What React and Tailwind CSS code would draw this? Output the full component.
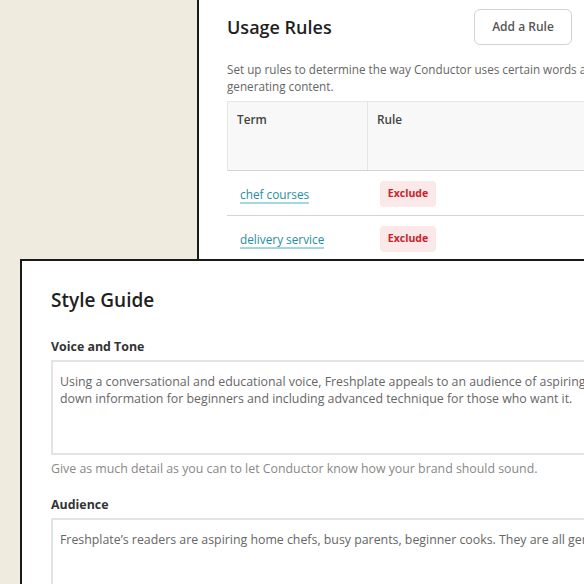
export default function App() {
  const rules = [
    { term: 'chef courses', rule: 'Exclude' },
    { term: 'delivery service', rule: 'Exclude' },
  ]

  return (
    <div className="w-[584px] h-[584px] overflow-hidden bg-[#efebdf] font-['Open_Sans',sans-serif]">
      {/* usage rules card */}
      <div className="ml-[197px] w-[420px] h-[261px] overflow-hidden bg-white border-l-2 border-b-2 border-[#1a1a1a] pl-[28px] pt-[9px]">
        <div className="flex items-center justify-between w-[345px] h-[36px]">
          <h2 className="text-[18px] leading-[26px] font-semibold text-[#1f1f1f]">Usage Rules</h2>
          <button className="w-[98px] h-[36px] rounded-[6px] border border-[#d2d2d2] bg-white text-[12px] font-semibold text-[#555]">
            Add a Rule
          </button>
        </div>
        <p className="mt-[16px] text-[11.7px] leading-[17px] text-[#666] whitespace-nowrap">
          Set up rules to determine the way Conductor uses certain words and phrases when
          <br />
          generating content.
        </p>
        <div className="mt-[6px] w-[420px]">
          <div className="flex h-[70px] bg-[#f8f8f8] border border-[#e6e6e6] border-b-[#d4d4d4]">
            <div className="w-[140px] border-r border-[#e6e6e6] pl-[9px] pt-[7px] text-[11.8px] leading-[20px] font-semibold text-[#444]">
              Term
            </div>
            <div className="flex-1 pl-[9px] pt-[7px] text-[11.8px] leading-[20px] font-semibold text-[#444]">
              Rule
            </div>
          </div>
          {rules.map((r) => (
            <div key={r.term} className="flex items-center h-[45px] border-b border-[#d4d4d4]">
              <div className="w-[140px] pl-[13px]">
                <span className="inline-block border-b-2 border-[#a6d7df] text-[11.8px] leading-[15px] text-[#1f8ea0]">
                  {r.term}
                </span>
              </div>
              <div className="flex-1 pl-[13px]">
                <span className="inline-flex items-center justify-center w-[56px] h-[26px] rounded-[4px] bg-[#fbe8e8] text-[10.5px] font-bold text-[#c8232c]">
                  {r.rule}
                </span>
              </div>
            </div>
          ))}
        </div>
      </div>

      {/* style guide card */}
      <div className="ml-[20px] -mt-[2px] w-[600px] h-[400px] bg-white border-t-2 border-l-2 border-[#1a1a1a] pl-[29px] pt-[25px]">
        <h2 className="text-[19px] leading-[28px] font-semibold text-[#1f1f1f]">Style Guide</h2>

        <div className="mt-[23px] text-[12.4px] leading-[20px] font-bold text-[#333]">Voice and Tone</div>
        <div className="mt-[3px] w-[560px] h-[95px] border-2 border-[#e3e3e3] pl-[7px] pt-[11px] text-[12.35px] leading-[17px] text-[#666] whitespace-nowrap">
          Using a conversational and educational voice, Freshplate appeals to an audience of aspiring home chefs, breaking
          <br />
          down information for beginners and including advanced technique for those who want it.
        </div>
        <p className="mt-[4px] text-[12.35px] leading-[20px] text-[#888]">
          Give as much detail as you can to let Conductor know how your brand should sound.
        </p>

        <div className="mt-[16px] text-[12.4px] leading-[20px] font-bold text-[#333]">Audience</div>
        <div className="mt-[3px] w-[560px] h-[100px] border-2 border-[#e3e3e3] pl-[7px] pt-[11px] text-[12.35px] leading-[17px] text-[#666] whitespace-nowrap">
          Freshplate’s readers are aspiring home chefs, busy parents, beginner cooks. They are all generally new to cooking.
        </div>
      </div>
    </div>
  )
}
